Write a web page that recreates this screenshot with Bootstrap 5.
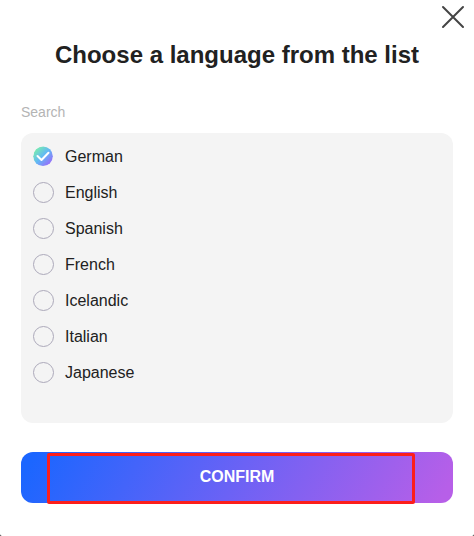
<!DOCTYPE html>
<html lang="en">
<head>
<meta charset="utf-8">
<meta name="viewport" content="width=device-width, initial-scale=1">
<title>Choose a language</title>
<link href="https://cdn.jsdelivr.net/npm/bootstrap@5.3.0/dist/css/bootstrap.min.css" rel="stylesheet">
<style>
  body { background: #222; font-family: "Liberation Sans", Arial, sans-serif; color: #212121; }
  .language-dialog { background: #fff; border-radius: 0 0 2px 2px; padding: 5px 21px 33px; }
  .close-dialog { margin-right: -12px; line-height: 0; }
  .dialog-title { font-size: 24px; line-height: 28px; margin-top: 12px; margin-bottom: 33px; }
  .search-box, .search-box:focus { font-size: 14px; line-height: 20px; color: #212121; background: transparent; box-shadow: none; }
  .search-box::placeholder { color: #b4b4b4; opacity: 1; }
  .language-list { background: #f4f4f4; border-radius: 12px; margin-top: 11px; padding: 5px 12px 33px; }
  .language-row { height: 36px; font-size: 16px; gap: 11px; }
  .language-row span { padding-top: 2px; }
  .language-row .form-check-input { width: 21px; height: 21px; margin: 0; border: 1px solid #aca9ba; background-color: transparent; box-shadow: none; }
  .language-row .form-check-input:checked {
    border: 0; background-origin: border-box; background-size: 100% 100%;
    background-color: transparent;
    background-image: url("data:image/svg+xml,%3Csvg xmlns='http://www.w3.org/2000/svg' viewBox='0 0 21 21'%3E%3Cdefs%3E%3ClinearGradient id='g' x1='.1' y1='.1' x2='.9' y2='.9'%3E%3Cstop stop-color='%237af0aa'/%3E%3Cstop offset='.5' stop-color='%2362b8f5'/%3E%3Cstop offset='1' stop-color='%239b68fa'/%3E%3C/linearGradient%3E%3C/defs%3E%3Ccircle cx='10' cy='10.2' r='9.8' fill='url(%23g)'/%3E%3Cpath d='M4.5 10l4 4L15.5 6.7' fill='none' stroke='white' stroke-width='2' stroke-linecap='round' stroke-linejoin='round'/%3E%3C/svg%3E");
  }
  .confirm-area { margin-top: 29px; }
  .confirm-btn, .confirm-btn:hover { height: 51px; border: 0; border-radius: 12px; font-size: 16px; line-height: 20px; padding: 0 0 2px; color: #fff; background: linear-gradient(120deg, #1b66ff 3%, #6b62f5 50%, #b75fe8 97%); }
  .highlight-frame { top: 1px; bottom: -1px; left: 26px; right: 38px; border: 3px solid #fc1e1b; border-radius: 2px; pointer-events: none; }
</style>
</head>
<body>
<main class="language-dialog">
  <div class="d-flex justify-content-end">
    <button type="button" class="close-dialog btn p-0 border-0" aria-label="Close">
      <svg width="24" height="24" viewBox="0 0 24 24" fill="none" stroke="#444" stroke-width="2" stroke-linecap="round"><path d="M2 2l20 20M22 2L2 22"/></svg>
    </button>
  </div>
  <h1 class="dialog-title fw-bold text-center">Choose a language from the list</h1>
  <form>
    <input type="search" class="search-box form-control border-0 rounded-0 p-0" placeholder="Search" aria-label="Search">
    <div class="language-list" role="radiogroup" aria-label="Languages">
      <label class="language-row d-flex align-items-center"><input class="form-check-input" type="radio" name="language" checked><span>German</span></label>
      <label class="language-row d-flex align-items-center"><input class="form-check-input" type="radio" name="language"><span>English</span></label>
      <label class="language-row d-flex align-items-center"><input class="form-check-input" type="radio" name="language"><span>Spanish</span></label>
      <label class="language-row d-flex align-items-center"><input class="form-check-input" type="radio" name="language"><span>French</span></label>
      <label class="language-row d-flex align-items-center"><input class="form-check-input" type="radio" name="language"><span>Icelandic</span></label>
      <label class="language-row d-flex align-items-center"><input class="form-check-input" type="radio" name="language"><span>Italian</span></label>
      <label class="language-row d-flex align-items-center"><input class="form-check-input" type="radio" name="language"><span>Japanese</span></label>
    </div>
    <div class="confirm-area position-relative">
      <button type="button" class="confirm-btn btn w-100 fw-bold">CONFIRM</button>
      <div class="highlight-frame position-absolute"></div>
    </div>
  </form>
</main>
<script src="https://cdn.jsdelivr.net/npm/bootstrap@5.3.0/dist/js/bootstrap.bundle.min.js"></script>
</body>
</html>
